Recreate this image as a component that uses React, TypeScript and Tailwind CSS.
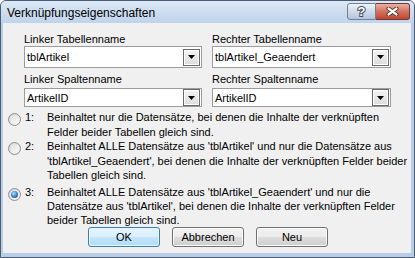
import React from 'react';

function DropButton() {
  return (
    <div className="mr-[1px] flex h-[17px] w-[17px] shrink-0 items-center justify-center border border-[#6a6a6a] bg-linear-to-b from-[#f4f4f4] to-[#dcdcdc] shadow-[inset_0_0_0_1px_#ffffff]">
      <svg width="7" height="4" viewBox="0 0 7 4">
        <path d="M0 0h7L3.5 4z" fill="#000" />
      </svg>
    </div>
  );
}

function Combo({ value, tall }: { value: string; tall?: boolean }) {
  return (
    <div
      className={`flex items-center border border-[#9c9c9c] bg-white ${tall ? 'h-[22px]' : 'mt-[2px] h-[19px]'}`}
    >
      <span className="flex-1 pl-[2px] leading-[14px]">{value}</span>
      <DropButton />
    </div>
  );
}

function Radio({ checked }: { checked?: boolean }) {
  return (
    <div className="mt-[3px] flex h-[13px] w-[13px] shrink-0 items-center justify-center rounded-full border border-[#8e8f8f] bg-linear-to-br from-[#cfcfcf] to-[#f8f8f8]">
      <div className="flex h-[9px] w-[9px] items-center justify-center rounded-full bg-linear-to-br from-[#dedede] to-[#fbfbfb]">
        {checked && (
          <div className="h-[7px] w-[7px] rounded-full bg-[radial-gradient(circle_at_40%_35%,#b4e2ff_0%,#2f7cc4_55%,#163f6e_100%)]" />
        )}
      </div>
    </div>
  );
}

function Row({ n, lines, checked, extra }: { n: string; lines: string[]; checked?: boolean; extra?: string }) {
  return (
    <div className={`flex ${extra ?? ''}`}>
      <Radio checked={checked} />
      <span className="w-[26px] shrink-0 pl-[4px]">{n}</span>
      <div className="flex flex-col">
        {lines.map((l) => (
          <span key={l} className="whitespace-nowrap">
            {l}
          </span>
        ))}
      </div>
    </div>
  );
}

function Btn({ label, primary }: { label: string; primary?: boolean }) {
  return (
    <div
      className={`flex h-[20px] w-[72px] items-center justify-center rounded-[3px] border leading-[14px] ${
        primary
          ? 'border-[#3c7fb1] bg-[linear-gradient(#e5f4fd,#d9effc_50%,#c4e5fb_50%,#b2dcf7)] shadow-[inset_0_0_0_1px_#e8f6fe]'
          : 'border-[#707070] bg-[linear-gradient(#f2f2f2,#ebebeb_50%,#dddddd_50%,#cfcfcf)] shadow-[inset_0_0_0_1px_#fcfcfc]'
      }`}
    >
      {label}
    </div>
  );
}

export default function App() {
  return (
    <div className="h-[258px] w-[415px] bg-white font-['Liberation_Sans',Arial,sans-serif] text-[11px] text-black">
      <div className="flex h-full flex-col rounded-t-[6px] border border-[#4a5d75] bg-[#b9cde6]">
        {/* title bar */}
        <div className="flex h-[22px] shrink-0 items-start rounded-t-[5px] bg-linear-to-b from-[#dce8f5] to-[#bfd3ea]">
          <span className="ml-[6px] mt-[5px] text-[12px] leading-[15px]">Verknüpfungseigenschaften</span>
          <div className="ml-auto mr-[4px] mt-[2px] flex">
            <div className="flex h-[17px] w-[29px] items-center justify-center rounded-l-[3px] border border-[#6f8196] bg-linear-to-b from-[#eef3f9] via-[#cfdbea] to-[#b3c4da]">
              <span className="text-[13px] font-bold leading-[13px] text-white [-webkit-text-stroke:2px_#3f5066] [paint-order:stroke_fill]">
                ?
              </span>
            </div>
            <div className="flex h-[17px] w-[34px] items-center justify-center rounded-r-[3px] border border-l-0 border-[#6b3a33] bg-linear-to-b from-[#eab0a2] via-[#d4715f] to-[#c04631]">
              <svg width="13" height="9" viewBox="0 0 13 9">
                <path d="M2.5 1.5L10.5 7.5M10.5 1.5L2.5 7.5" stroke="#4d2620" strokeWidth="4" strokeLinecap="round" />
                <path d="M2.5 1.5L10.5 7.5M10.5 1.5L2.5 7.5" stroke="#ffffff" strokeWidth="2.2" strokeLinecap="round" />
              </svg>
            </div>
          </div>
        </div>

        {/* client */}
        <div className="mb-[4px] ml-[2px] mr-[3px] flex flex-1 flex-col bg-[#f0f0f0]">
          <div className="grid grid-cols-[178px_179px] gap-x-[10px] pl-[21px] pt-[9px]">
            <div className="flex flex-col">
              <span className="leading-[14px]">Linker Tabellenname</span>
              <Combo value="tblArtikel" tall />
              <span className="mt-[4px] leading-[14px]">Linker Spaltenname</span>
              <Combo value="ArtikelID" />
            </div>
            <div className="flex flex-col">
              <span className="leading-[14px]">Rechter Tabellenname</span>
              <Combo value="tblArtikel_Geaendert" tall />
              <span className="mt-[4px] leading-[14px]">Rechter Spaltenname</span>
              <Combo value="ArtikelID" />
            </div>
          </div>

          <div className="mt-[3px] flex flex-col pl-[5px] leading-[14.5px]">
            <Row
              n="1:"
              lines={['Beinhaltet nur die Datensätze, bei denen die Inhalte der verknüpften', 'Felder beider Tabellen gleich sind.']}
            />
            <Row
              n="2:"
              lines={[
                "Beinhaltet ALLE Datensätze aus 'tblArtikel' und nur die Datensätze aus",
                "'tblArtikel_Geaendert', bei denen die Inhalte der verknüpften Felder beider",
                'Tabellen gleich sind.',
              ]}
            />
            <Row
              n="3:"
              checked
              extra="mt-[2px] leading-[14px]"
              lines={[
                "Beinhaltet ALLE Datensätze aus 'tblArtikel_Geaendert' und nur die",
                "Datensätze aus 'tblArtikel', bei denen die Inhalte der verknüpften Felder",
                'beider Tabellen gleich sind.',
              ]}
            />
          </div>

          <div className="flex gap-[12px] pl-[85px]">
            <Btn label="OK" primary />
            <Btn label="Abbrechen" />
            <Btn label="Neu" />
          </div>
        </div>
      </div>
    </div>
  );
}
